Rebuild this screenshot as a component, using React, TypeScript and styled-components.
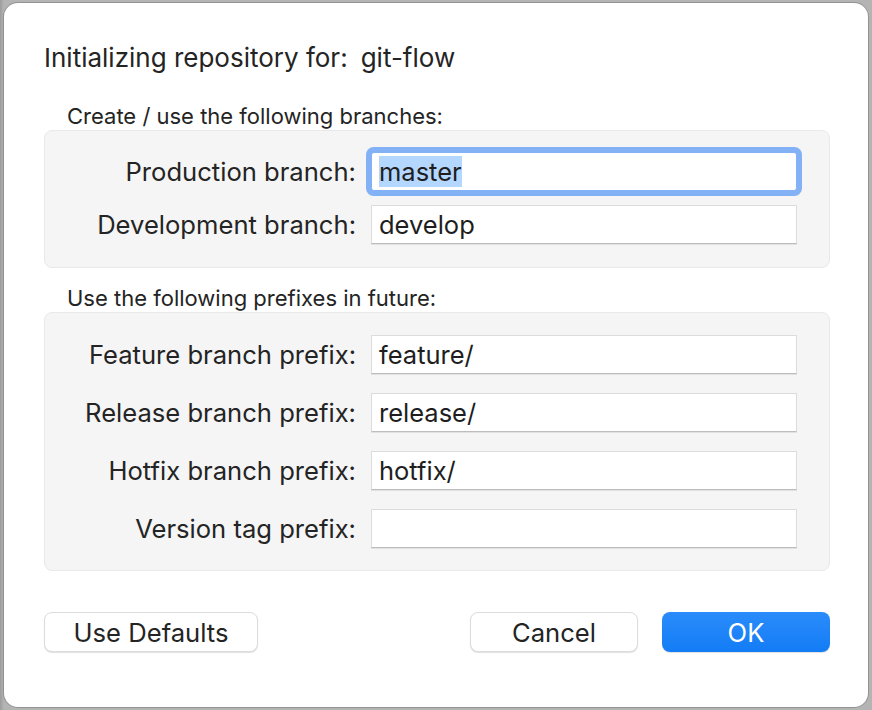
import React from "react";
import styled, { createGlobalStyle } from "styled-components";

const Global = createGlobalStyle`
  html, body { margin: 0; padding: 0; background: #a6a6a6; }
  body { font-family: Inter, "Open Sans", "Liberation Sans", sans-serif; -webkit-font-smoothing: antialiased; }
`;

const Screen = styled.div`
  width: 872px;
  height: 710px;
  box-sizing: border-box;
  padding: 3px 4px 3px 4px;
  background: linear-gradient(90deg, #9c9c9c 0px, #b4b4b4 4px, #b4b4b4 100%);
`;

const Dialog = styled.div`
  box-sizing: border-box;
  width: 864px;
  height: 704px;
  background: #ffffff;
  border-radius: 14px;
  box-shadow: 0 0 0 1px rgba(0, 0, 0, 0.18);
  padding: 37px 38px 0 40px;
  display: flex;
  flex-direction: column;
  color: #242424;
`;

const Title = styled.div`
  font-size: 26px;
  line-height: 36px;
  display: flex;
  gap: 13px;
  margin-bottom: 28px;
`;

const SectionLabel = styled.div`
  font-size: 22px;
  line-height: 24px;
  padding-left: 23px;
  margin-bottom: 2px;
`;

const Group = styled.div<{ $pt: number; $pb: number; $gap: number; $mb: number }>`
  box-sizing: border-box;
  background: #f5f5f5;
  border: 1px solid #e9e9e9;
  border-radius: 8px;
  padding: ${(p) => p.$pt}px 32px ${(p) => p.$pb}px 0;
  display: flex;
  flex-direction: column;
  gap: ${(p) => p.$gap}px;
  margin-bottom: ${(p) => p.$mb}px;
`;

const Row = styled.div`
  display: grid;
  grid-template-columns: 311px 426px;
  column-gap: 15px;
  align-items: center;
`;

const Label = styled.div`
  font-size: 25.6px;
  text-align: right;
  white-space: nowrap;
`;

const Field = styled.div<{ $focused?: boolean }>`
  box-sizing: border-box;
  height: 39px;
  background: #fff;
  border: 1px solid ${(p) => (p.$focused ? "#82b1f6" : "#dcdcdc")};
  border-bottom-color: ${(p) => (p.$focused ? "#82b1f6" : "#bdbdbd")};
  box-shadow: ${(p) => (p.$focused ? "0 0 0 5px #82b1f6" : "0 1px 0 rgba(0,0,0,0.08)")};
  border-radius: ${(p) => (p.$focused ? "3px" : "0")};
  display: flex;
  align-items: center;
  padding-left: 7px;
  font-size: 25.5px;
  color: #1e1e1e;
  white-space: nowrap;
`;

const Selected = styled.span`
  background: #b3d7ff;
`;

const Buttons = styled.div`
  display: flex;
  align-items: center;
`;

const Button = styled.button<{ $w: number; $primary?: boolean }>`
  width: ${(p) => p.$w}px;
  height: 40px;
  box-sizing: border-box;
  border-radius: 8px;
  font-family: inherit;
  font-size: 25.6px;
  border: ${(p) => (p.$primary ? "none" : "1px solid #dcdcdc")};
  background: ${(p) => (p.$primary ? "linear-gradient(#2b8cfb, #137cf5)" : "#ffffff")};
  color: ${(p) => (p.$primary ? "#ffffff" : "#242424")};
  box-shadow: 0 1px 1px rgba(0, 0, 0, 0.12);
  padding: 0;
`;

const Spacer = styled.div`
  flex: 1;
`;

const Gap = styled.div<{ $w: number }>`
  width: ${(p) => p.$w}px;
`;

export default function App() {
  return (
    <>
      <Global />
      <Screen>
        <Dialog>
          <Title>
            <span>Initializing repository for:</span>
            <span>git-flow</span>
          </Title>
          <SectionLabel>Create / use the following branches:</SectionLabel>
          <Group $pt={21} $pb={23} $gap={14} $mb={18}>
            <Row>
              <Label>Production branch:</Label>
              <Field $focused>
                <Selected>master</Selected>
              </Field>
            </Row>
            <Row>
              <Label>Development branch:</Label>
              <Field>develop</Field>
            </Row>
          </Group>
          <SectionLabel>Use the following prefixes in future:</SectionLabel>
          <Group $pt={22} $pb={22} $gap={19} $mb={41}>
            <Row>
              <Label>Feature branch prefix:</Label>
              <Field>feature/</Field>
            </Row>
            <Row>
              <Label>Release branch prefix:</Label>
              <Field>release/</Field>
            </Row>
            <Row>
              <Label>Hotfix branch prefix:</Label>
              <Field>hotfix/</Field>
            </Row>
            <Row>
              <Label>Version tag prefix:</Label>
              <Field></Field>
            </Row>
          </Group>
          <Buttons>
            <Button $w={214}>Use Defaults</Button>
            <Spacer />
            <Button $w={168}>Cancel</Button>
            <Gap $w={24} />
            <Button $w={168} $primary>
              OK
            </Button>
          </Buttons>
        </Dialog>
      </Screen>
    </>
  );
}
